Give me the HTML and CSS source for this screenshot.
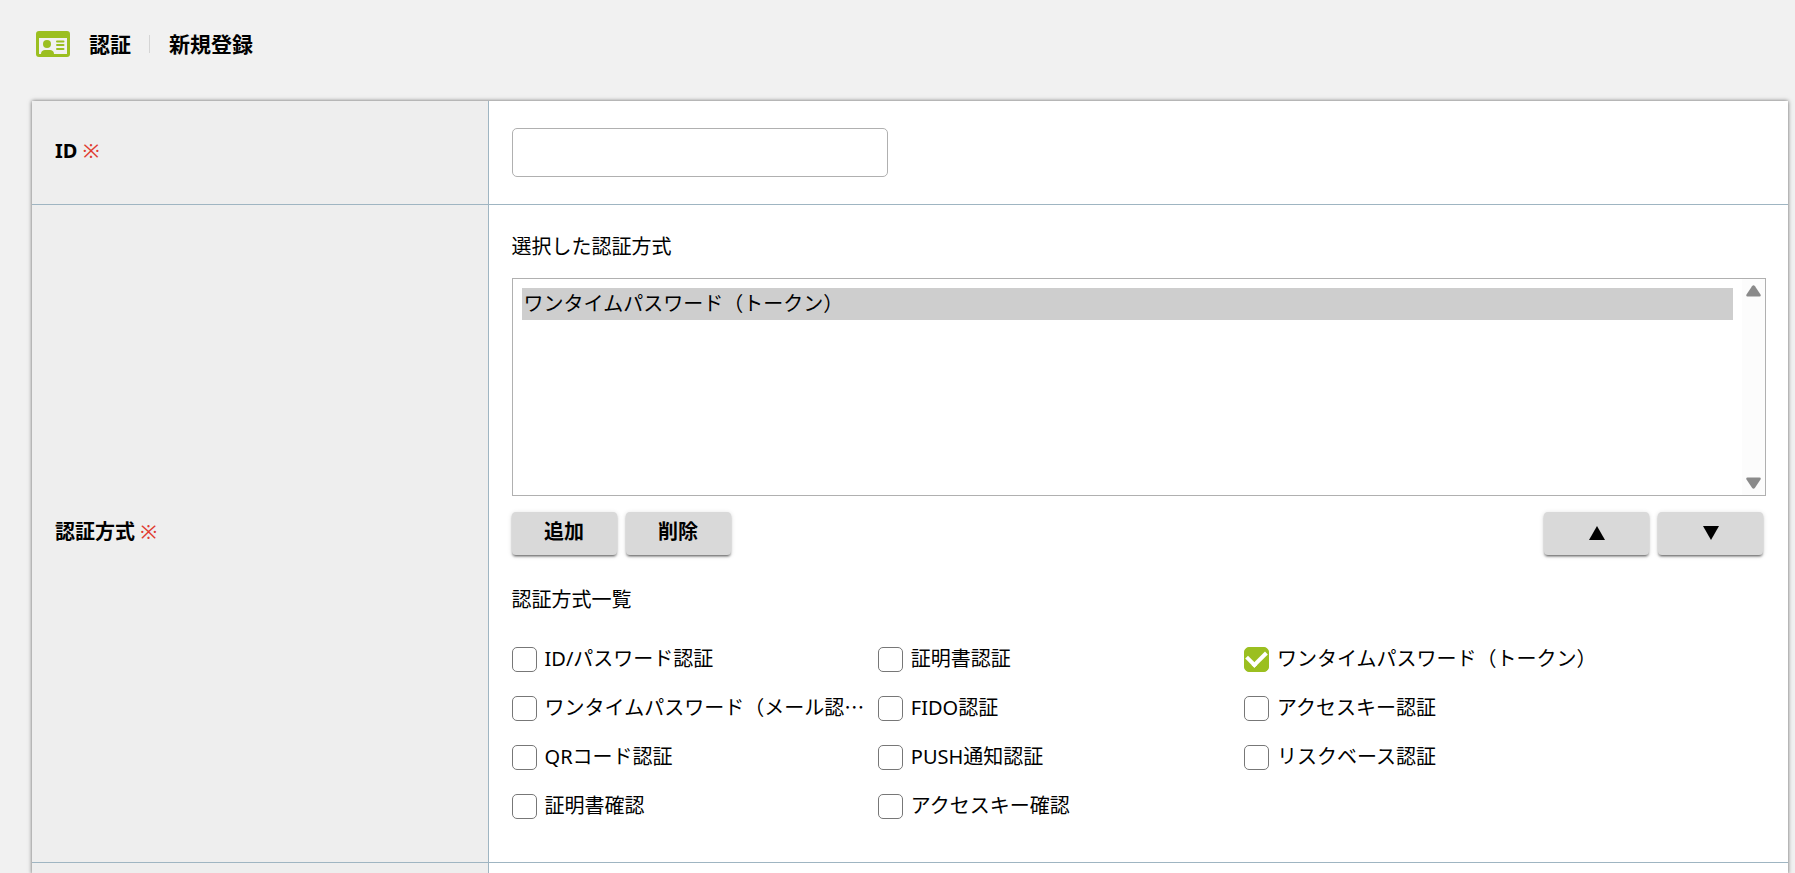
FILE: index.html
```html
<!DOCTYPE html>
<html lang="ja">
<head>
    <meta charset="UTF-8">
    <meta name="viewport" content="width=device-width, initial-scale=1.0">
    <title>認証 新規登録</title>
    <link rel="stylesheet" href="styles.css">
</head>
<body>
    <header class="page-header">
        <svg class="page-icon" viewBox="0 0 34 26" aria-hidden="true">
            <path fill="#9bbf20" fill-rule="evenodd" d="M3 0h28a3 3 0 0 1 3 3v20a3 3 0 0 1-3 3H3a3 3 0 0 1-3-3V3a3 3 0 0 1 3-3zM3 7v16h2c0-3 2-4 4-4h5c2 0 4 1 4 4h13V7z"/>
            <circle cx="11" cy="13" r="4" fill="#9bbf20"/>
            <path stroke="#9bbf20" stroke-width="2" stroke-linecap="round" d="M21 10.500h6.500M21 14h6.500M21 18h6.500"/>
        </svg>
        <h1 class="page-title">認証</h1>
        <span class="page-subtitle">新規登録</span>
    </header>

    <form>
        <table class="form-table">
            <tr>
                <th><label for="auth-id">ID <span class="required">※</span></label></th>
                <td><input type="text" class="text-box" id="auth-id" name="auth-id" required></td>
            </tr>
            <tr>
                <th>認証方式 <span class="required">※</span></th>
                <td>
                    <label class="caption" for="selected">選択した認証方式</label>
                    <div class="list-box">
                        <select class="list" id="selected" name="selected" multiple>
                            <option selected>ワンタイムパスワード（トークン）</option>
                        </select>
                        <div class="scroll-track" aria-hidden="true">
                            <svg class="scroll-arrow" viewBox="0 0 15 12"><path d="M6 1.200Q7.500-.6 9 1.200L14.500 9.500Q15.300 11.500 13.500 11.500H1.500Q-.3 11.500.5 9.500z"/></svg>
                            <svg class="scroll-arrow" viewBox="0 0 15 12"><path d="M6 10.800Q7.500 12.600 9 10.800L14.500 2.500Q15.300.5 13.500.5H1.500Q-.3.5.5 2.500z"/></svg>
                        </div>
                    </div>
                    <div class="buttons">
                        <button type="button">追加</button>
                        <button type="button">削除</button>
                        <button type="button" class="move-up" aria-label="上へ"><svg class="arrow" viewBox="0 0 16 14"><path d="M8 0l8 14H0z"/></svg></button>
                        <button type="button" aria-label="下へ"><svg class="arrow" viewBox="0 0 16 14"><path d="M8 14l8-14H0z"/></svg></button>
                    </div>
                    <p class="caption">認証方式一覧</p>
                    <div class="methods">
                        <label><input type="checkbox" name="method"><span>ID/パスワード認証</span></label>
                        <label><input type="checkbox" name="method"><span>証明書認証</span></label>
                        <label><input type="checkbox" name="method" checked><span>ワンタイムパスワード（トークン）</span></label>
                        <label><input type="checkbox" name="method"><span>ワンタイムパスワード（メール認⋯</span></label>
                        <label><input type="checkbox" name="method"><span>FIDO認証</span></label>
                        <label><input type="checkbox" name="method"><span>アクセスキー認証</span></label>
                        <label><input type="checkbox" name="method"><span>QRコード認証</span></label>
                        <label><input type="checkbox" name="method"><span>PUSH通知認証</span></label>
                        <label><input type="checkbox" name="method"><span>リスクベース認証</span></label>
                        <label><input type="checkbox" name="method"><span>証明書確認</span></label>
                        <label><input type="checkbox" name="method"><span>アクセスキー確認</span></label>
                    </div>
                </td>
            </tr>
            <tr class="last-row">
                <th></th>
                <td></td>
            </tr>
        </table>
    </form>
</body>
</html>
```
FILE: styles.css
```css
* {
    box-sizing: border-box;
}
body {
    margin: 0;
    padding: 24px 7px 0 32px;
    background-color: #f1f1f1;
    color: #000;
    font-family: "Noto Sans", "Noto Sans CJK JP", sans-serif;
    font-size: 20px;
    line-height: 30px;
}
/* Page heading */
.page-header {
    display: flex;
    align-items: center;
    height: 40px;
    margin-bottom: 37px;
    padding-left: 4px;
    font-size: 21px;
    font-weight: bold;
}
.page-icon {
    width: 34px;
    height: 26px;
    margin-right: 19px;
}
.page-title {
    margin: 0;
    font-size: 21px;
}
.page-subtitle {
    display: flex;
    align-items: center;
}
.page-subtitle::before {
    content: "";
    width: 1px;
    height: 18px;
    margin: 0 19px 0 18px;
    background-color: #d5d5d5;
}
/* Form table */
.form-table {
    width: 100%;
    border-collapse: separate;
    border-spacing: 0;
    background-color: #fff;
    table-layout: fixed;
    box-shadow: 0 0 4px rgba(0, 0, 0, 0.6);
}
.form-table th {
    width: 26%;
    padding: 22px 23px 25px;
    text-align: left;
    font-weight: bold;
    background-color: #eee;
    border-right: 1px solid #9fb5c2;
    border-bottom: 1px solid #9fb5c2;
}
.form-table td {
    padding: 27px 22px 27px 23px;
    border-bottom: 1px solid #9fb5c2;
}
.form-table .last-row th,
.form-table .last-row td {
    height: 11px;
    padding: 0;
    border-bottom: none;
}
.required {
    color: #e03c31;
    font-weight: normal;
}
.text-box {
    display: block;
    width: 30%;
    height: 49px;
    padding: 0 12px;
    font: inherit;
    background-color: #fff;
    border: 1px solid #b0b0b0;
    border-radius: 5px;
}
.caption {
    display: block;
    margin: 0;
}
/* Selected methods */
.list-box {
    display: flex;
    height: 218px;
    margin: 16px 0;
    border: 1px solid #b0b0b0;
}
.list {
    flex: 1;
    min-width: 0;
    padding: 9px;
    border: none;
    outline: none;
    overflow: hidden;
    background-color: #fff;
    color: #000;
    font: inherit;
}
.list option {
    min-height: 32px;
    padding: 0 2px 3px;
    line-height: 27px;
}
.list option:checked {
    background-color: #cecece;
    color: #000;
}
.scroll-track {
    display: flex;
    flex-direction: column;
    justify-content: space-between;
    align-items: center;
    width: 23px;
    padding: 6px 0;
    background-color: #fcfcfc;
}
.scroll-arrow {
    width: 15px;
    height: 12px;
    fill: #8a8a8a;
}
.buttons {
    display: flex;
    gap: 9px;
    padding-right: 3px;
    margin-bottom: 30px;
}
.buttons button {
    width: 105px;
    height: 43px;
    padding: 0 0 4px;
    border: none;
    border-radius: 4px;
    background-color: #d9d9d9;
    color: #000;
    font: inherit;
    font-weight: bold;
    cursor: pointer;
    box-shadow: 0 3px 1px -2px rgba(0, 0, 0, 0.2), 0 2px 2px rgba(0, 0, 0, 0.3), 0 1px 5px rgba(0, 0, 0, 0.15);
}
.buttons .move-up {
    margin-left: auto;
}
.arrow {
    width: 16px;
    height: 14px;
    vertical-align: middle;
}
/* Method check boxes */
.methods {
    display: grid;
    grid-template-columns: repeat(3, 28%);
    column-gap: 15px;
    row-gap: 19px;
    padding: 29px 0 14px;
}
.methods label {
    display: flex;
    align-items: center;
    gap: 8px;
    white-space: nowrap;
}
.methods input {
    appearance: none;
    flex: none;
    display: grid;
    place-items: center;
    width: 25px;
    height: 25px;
    margin: 0;
    background-color: #fff;
    border: 1px solid #777;
    border-radius: 5px;
}
.methods input:checked {
    background-color: #9bbf20;
    border-color: #9bbf20;
}
.methods input:checked::before {
    content: "";
    width: 15px;
    height: 9px;
    margin-bottom: 5px;
    border-left: 4px solid #fff;
    border-bottom: 4px solid #fff;
    transform: rotate(-45deg);
}
```
